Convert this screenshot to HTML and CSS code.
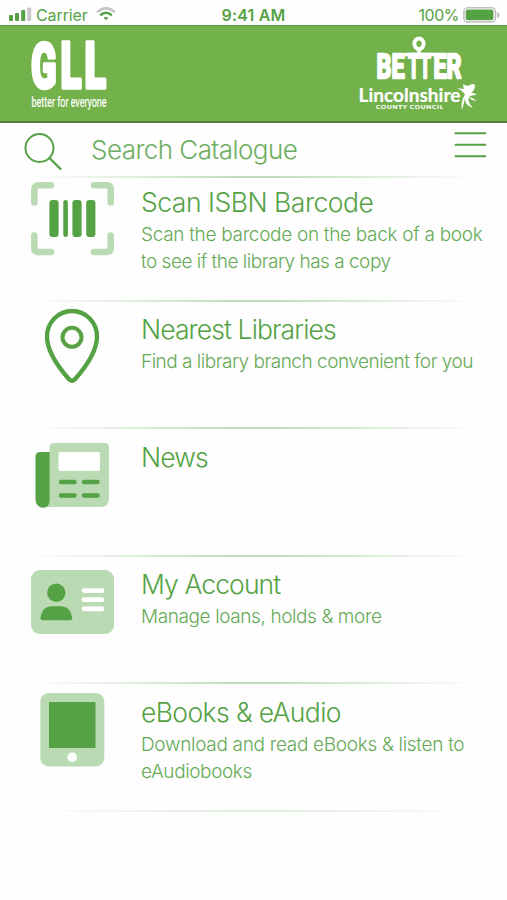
FILE: index.html
```html
<!DOCTYPE html>
<html lang="en">
<head>
<meta charset="utf-8">
<title>Library</title>
<link rel="stylesheet" href="styles.css">
</head>
<body>
<div class="status">
  <div class="status-left">
    <svg width="23" height="14" viewBox="0 0 23 14"><g fill="#55a245"><rect x="0" y="8" width="4" height="6" rx="1"/><rect x="6" y="6" width="4" height="8" rx="1"/><rect x="12.200" y="3" width="4" height="11" rx="1"/></g><rect x="18.200" y="0.500" width="4" height="13.500" rx="1" fill="#c8c8c8"/></svg>
    <span class="carrier">Carrier</span>
    <svg class="wifi" width="20" height="14" viewBox="0 0 20 14" fill="none" stroke-width="2.400"><path d="M1.200 5.200Q10-2.800 18.800 5.200" stroke="#c4c4c4"/><path d="M4.200 8.300Q10 3 15.800 8.300" stroke="#55a245"/><path d="M7.400 10.800Q10 9 12.600 10.800L10 13Z" stroke="none" fill="#55a245"/></svg>
  </div>
  <div class="clock">9:41 AM</div>
  <div class="status-right">
    <span class="percent">100%</span>
    <svg width="37" height="16" viewBox="0 0 37 16"><rect x="0.900" y="0.800" width="31.500" height="14.200" rx="4" fill="#fff" stroke="#bfbfbf" stroke-width="1.600"/><rect x="2.700" y="2.500" width="27.700" height="10.700" rx="2" fill="#55a245"/><path d="M34 5Q36.500 5.500 36.500 8T34 11Z" fill="#bfbfbf"/></svg>
  </div>
</div>
<header class="brand">
  <svg class="gll" width="80" height="74" viewBox="0 0 80 74" fill="#fff" stroke="#fff">
    <g class="condensed heavy" stroke-width="3.600"><text x="1" y="46.800" font-size="63" textLength="25.500" lengthAdjust="spacingAndGlyphs">G</text><text x="30.500" y="46.800" font-size="65" textLength="21" lengthAdjust="spacingAndGlyphs">L</text><text x="54.500" y="46.800" font-size="65" textLength="21.500" lengthAdjust="spacingAndGlyphs">L</text></g>
    <text class="tagline" x="1.500" y="65.800" font-size="14" stroke-width=".2" textLength="75" lengthAdjust="spacingAndGlyphs">better for everyone</text>
  </svg>
  <svg class="better" width="122" height="78" viewBox="0 0 122 78" fill="#fff" stroke="#fff">
    <ellipse cx="61" cy="9.800" rx="4.600" ry="5.200" fill="none" stroke-width="4"/>
    <g class="condensed" font-size="34" stroke-width="2.400"><text x="18.500" y="44" textLength="28" lengthAdjust="spacingAndGlyphs">BE</text><text x="50" y="44" textLength="23" lengthAdjust="spacingAndGlyphs">TT</text><text x="75.500" y="44" textLength="28" lengthAdjust="spacingAndGlyphs">ER</text></g>
    <path d="M47 20.500H77M61 15V20" stroke-width="3.600"/>
    <text class="county" x="0.500" y="67.800" font-size="18.500" stroke-width=".2" textLength="102" lengthAdjust="spacingAndGlyphs">Lincolnshire</text>
    <text class="council" x="18" y="75.400" font-size="6.400" stroke-width=".2" textLength="67">COUNTY COUNCIL</text>
    <path stroke="none" d="M105 50Q109 53 112 51Q115 49 117 51Q117 56 114 58Q109 60 106 56ZM99 54.500Q108 54 112 58.500Q116 58 119 61Q114 60.500 111 63Q109 68 115 74Q106 71 107 64Q106 70 104 76Q102 68 107 60.500Q104 56 99 54.500ZM111 63Q116 64 118 67Q113 66.500 111 63Z"/>
  </svg>
</header>
<div class="search">
  <svg class="glass" width="40" height="40" viewBox="0 0 40 40" fill="none" stroke="#55a245" stroke-width="2" stroke-linecap="round"><circle cx="15.500" cy="15" r="14"/><path d="M25.500 25L36.500 36" stroke-width="2.400"/></svg>
  <span class="placeholder">Search Catalogue</span>
  <svg class="menu" width="34" height="28" viewBox="0 0 34 28" stroke="#55a245" stroke-width="2" stroke-linecap="round"><path d="M1.500 2.300H31.300M1.500 13.800H31.300M1.500 25.300H31.300"/></svg>
</div>
<div class="rule"></div>
<main>
  <section class="row first">
    <svg class="icon" width="84" height="76" viewBox="0 0 84 76"><path fill="none" stroke="#badab3" stroke-width="6.600" stroke-linecap="round" d="M3.300 21.500V8.300Q3.300 4.300 7.300 4.300H20M63 4.300H75.700Q79.700 4.300 79.700 8.300V21.500M3.300 54.500V67Q3.300 71 7.300 71H20M63 71H75.700Q79.700 71 79.700 67V54.500"/><g fill="#55a245"><rect x="18.400" y="19" width="9.200" height="37" rx="3.200"/><rect x="32.300" y="19" width="4.600" height="37" rx="2.300"/><rect x="41.400" y="19" width="9.200" height="37" rx="3.200"/><rect x="55.200" y="19" width="9.200" height="37" rx="3.200"/></g></svg>
    <div class="copy"><h2 class="scan">Scan ISBN Barcode</h2><p class="wide">Scan the barcode on the back of a book</p><p>to see if the library has a copy</p></div>
  </section>
  <div class="rule"></div>
  <section class="row">
    <svg class="icon" width="84" height="76" viewBox="0 0 84 76" fill="none" stroke="#55a245"><path stroke-width="4.400" stroke-linejoin="round" d="M38.500 71.800C32 64.500 16 46 16 28.500A25 25.500 0 0 1 66 28.500C66 46 50 64.500 43.500 71.800Q41 73.700 38.500 71.800Z"/><circle cx="41" cy="29.300" r="9.500" stroke-width="4"/></svg>
    <div class="copy"><h2 class="tight">Nearest Libraries</h2><p>Find a library branch convenient for you</p></div>
  </section>
  <div class="rule"></div>
  <section class="row">
    <svg class="icon" width="84" height="76" viewBox="0 0 84 76"><path fill="#55a245" d="M20 16H9.500Q4.500 16 4.500 21V64A7 7 0 0 0 20 64Z"/><path fill="#badab3" d="M23 7H73.500Q78 7 78 11.500V62Q78 71 69.500 71H16Q18.600 68.500 18.600 64V11.500Q18.600 7 23 7Z"/><rect x="27.500" y="16" width="41.500" height="19" rx="2" fill="#fff"/><path stroke="#55a245" stroke-width="4.500" stroke-linecap="round" d="M30 46H43.500M53 46H66.500M30 59.500H43.500M53 59.500H66.500"/></svg>
    <div class="copy"><h2 class="tight">News</h2></div>
  </section>
  <div class="rule"></div>
  <section class="row">
    <svg class="icon" width="84" height="76" viewBox="0 0 84 76"><rect x="0" y="7" width="83" height="64" rx="9" fill="#badab3"/><circle cx="25.300" cy="29.700" r="9.200" fill="#55a245"/><path fill="#55a245" d="M20.500 43.300H30.500Q39 43.500 41.200 54Q41.700 57.300 39 57.300H12Q9 57.300 9.500 54Q11.500 43.500 20.500 43.300Z"/><path stroke="#fff" stroke-width="4.800" stroke-linecap="round" d="M53 27.600H71M53 36.700H71M53 45.800H71"/></svg>
    <div class="copy"><h2 class="tight">My Account</h2><p class="medium">Manage loans, holds &amp; more</p></div>
  </section>
  <div class="rule"></div>
  <section class="row">
    <svg class="icon" width="84" height="76" viewBox="0 0 84 76"><rect x="9.300" y="2" width="64" height="73.500" rx="8.500" fill="#badab3"/><rect x="18" y="11" width="46.500" height="46" fill="#55a245"/><circle cx="41.200" cy="66.300" r="4.800" fill="#fff"/></svg>
    <div class="copy"><h2>eBooks &amp; eAudio</h2><p class="wide">Download and read eBooks &amp; listen to</p><p class="medium">eAudiobooks</p></div>
  </section>
  <div class="rule last"></div>
</main>
</body>
</html>
```
FILE: styles.css
```css
* { box-sizing: border-box; }
body {
  margin: 0;
  width: 507px;
  height: 900px;
  overflow: hidden;
  background: #fefefe;
  color: #55a245;
  font-family: Inter, "Liberation Sans", sans-serif;
  font-weight: 300;
}
svg { display: block; flex: none; overflow: visible; }
.status {
  display: grid;
  grid-template-columns: 1fr auto 1fr;
  height: 25px;
  padding: 5px 7px 0 9px;
  font-size: 16px;
  line-height: 20px;
  font-weight: 400;
}
.status-left, .status-right { display: flex; align-items: flex-start; }
.status-left svg { margin-top: 2px; }
.status-right { justify-content: flex-end; gap: 4px; }
.status-right svg { margin-top: 2px; }
.carrier { margin-left: 4px; letter-spacing: -0.1px; }
.status-left .wifi { margin-left: 8px; }
.clock { font-weight: 600; letter-spacing: 0.2px; margin-right: 2px; }
.percent { letter-spacing: -0.5px; }
.brand {
  display: flex;
  justify-content: space-between;
  height: 98px;
  padding: 11px 27px 0 30px;
  background: #73b14b;
  border-top: 1px solid #609c42;
  border-bottom: 2px solid #557c3c;
}
.brand .gll { margin-top: 4px; }
.brand .better { margin-top: -3px; }
.condensed { font-family: Roboto, sans-serif; font-weight: 700; stroke-linejoin: round; }
.heavy { font-weight: 900; }
.tagline { font-family: Roboto, sans-serif; font-weight: 400; }
.county { font-family: Lato, sans-serif; font-weight: 700; }
.council { font-family: Lato, sans-serif; font-weight: 700; }
.search {
  display: flex;
  height: 53px;
  padding: 0 19px 0 24px;
}
.glass { margin-top: 10px; }
.placeholder {
  flex: 1;
  margin-left: 27px;
  padding-top: 10px;
  font-size: 26px;
  line-height: 34px;
  letter-spacing: -0.55px;
  opacity: 0.86;
  white-space: nowrap;
}
.menu { margin-top: 8px; }
.rule {
  height: 2px;
  margin: 0 27px 0 30px;
  background: linear-gradient(90deg, transparent, #c0debb 45%, #c0debb 55%, transparent);
}
.rule.last { opacity: 0.5; }
.row {
  display: flex;
  gap: 26px;
  height: 125.5px;
  padding: 6px 0 0 31px;
}
.row .icon { margin-top: 0.7px; }
.row.first { height: 121.5px; padding-top: 2px; }
.copy { padding-top: 3.5px; }
h2 {
  margin: 0 0 1px;
  font-size: 26.5px;
  line-height: 36px;
  font-weight: 300;
  letter-spacing: -0.6px;
  white-space: nowrap;
}
h2.tight { letter-spacing: -0.9px; }
h2.scan { letter-spacing: -0.48px; }
p {
  margin: 0;
  font-size: 19px;
  line-height: 27px;
  opacity: 0.9;
  letter-spacing: -0.5px;
  white-space: nowrap;
}
p.wide { letter-spacing: -0.31px; }
p.medium { letter-spacing: -0.4px; }
```
